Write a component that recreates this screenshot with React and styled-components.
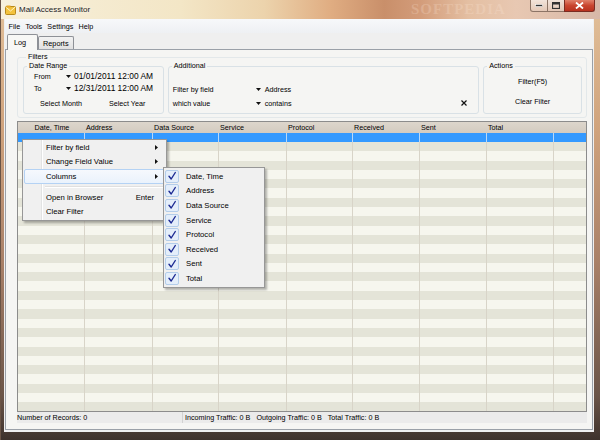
import React from 'react';
import styled, { createGlobalStyle, css } from 'styled-components';

const FONT = '"Liberation Sans", Arial, sans-serif';

const GlobalStyle = createGlobalStyle`
    html, body {
        margin: 0;
        padding: 0;
    }
    body {
        width: 600px;
        height: 440px;
        overflow: hidden;
        font-family: ${FONT};
        background: #4a3d35;
        color: #000;
    }
`;

const columns = [
    { title: 'Date, Time', width: 67, center: true },
    { title: 'Address', width: 68 },
    { title: 'Data Source', width: 66 },
    { title: 'Service', width: 68 },
    { title: 'Protocol', width: 66 },
    { title: 'Received', width: 67 },
    { title: 'Sent', width: 67 },
    { title: 'Total', width: 67 }
];

const checkedColumns = ['Date, Time', 'Address', 'Data Source', 'Service', 'Protocol', 'Received', 'Sent', 'Total'];

const Caret = () => (
    <svg width="5" height="3" viewBox="0 0 5 3">
        <path d="M0 0 H5 L2.5 3 Z" fill="#111" />
    </svg>
);

const SubArrow = () => (
    <svg width="3" height="5" viewBox="0 0 3 5">
        <path d="M0 0 L3 2.5 L0 5 Z" fill="#111" />
    </svg>
);

const Check = () => (
    <svg width="10" height="10" viewBox="0 0 10 10">
        <path d="M2 5.2 L4.2 8 L8.3 1.5" fill="none" stroke="#1d2b93" strokeWidth="1.4" strokeLinecap="round" strokeLinejoin="round" />
    </svg>
);

const AppIcon = () => (
    <svg width="11" height="10" viewBox="0 0 11 10">
        <rect x="0.5" y="1.5" width="10" height="8" rx="1" fill="#f3c23c" stroke="#b98a1a" />
        <path d="M0.8 2 L5.5 6 L10.2 2" fill="none" stroke="#fff3c4" strokeWidth="1" />
        <rect x="1.5" y="0.5" width="4" height="2" fill="#e8a92a" />
    </svg>
);

const App = () => {
    return (
        <>
            <GlobalStyle />
            <StWindow>
                <StTitleBar>
                    <AppIcon />
                    <StTitle>Mail Access Monitor</StTitle>
                    <StTitleMark>SOFTPEDIA</StTitleMark>
                    <StControls>
                        <StCtrlButton>
                            <svg width="8" height="3" viewBox="0 0 8 3">
                                <rect x="0.5" y="0.5" width="7" height="2" fill="#333" stroke="#fff" strokeWidth="0.6" />
                            </svg>
                        </StCtrlButton>
                        <StCtrlButton>
                            <svg width="8" height="7" viewBox="0 0 8 7">
                                <rect x="0.5" y="0.5" width="7" height="6" fill="none" stroke="#333" strokeWidth="1.2" />
                                <rect x="0.5" y="0.5" width="7" height="2" fill="#333" />
                            </svg>
                        </StCtrlButton>
                        <StCtrlButton $close>
                            <svg width="9" height="7" viewBox="0 0 9 7">
                                <path d="M1 0.5 L8 6.5 M8 0.5 L1 6.5" stroke="#fff" strokeWidth="1.8" />
                            </svg>
                        </StCtrlButton>
                    </StControls>
                </StTitleBar>

                <StClient>
                    <StMenuBar>
                        <StMenuBarItem>File</StMenuBarItem>
                        <StMenuBarItem>Tools</StMenuBarItem>
                        <StMenuBarItem>Settings</StMenuBarItem>
                        <StMenuBarItem>Help</StMenuBarItem>
                    </StMenuBar>

                    <StTabStrip>
                        <StTab $active>Log</StTab>
                        <StTab>Reports</StTab>
                    </StTabStrip>

                    <StTabPanel>
                        <StGroup $outer>
                            <StLegend>Filters</StLegend>
                            <StGroupRow>
                                <StGroup $w={141}>
                                    <StLegend>Date Range</StLegend>
                                    <StDateRow $top={0}>
                                        <StDateLabel>From</StDateLabel>
                                        <Caret />
                                        <StDateValue>01/01/2011 12:00 AM</StDateValue>
                                    </StDateRow>
                                    <StDateRow $top={2}>
                                        <StDateLabel>To</StDateLabel>
                                        <Caret />
                                        <StDateValue>12/31/2011 12:00 AM</StDateValue>
                                    </StDateRow>
                                    <StSelectRow>
                                        <StFlatButton>Select Month</StFlatButton>
                                        <StFlatButton>Select Year</StFlatButton>
                                    </StSelectRow>
                                </StGroup>

                                <StGroup $w={312}>
                                    <StLegend>Additional</StLegend>
                                    <StFieldRow $top={13}>
                                        <StFieldLabel>Filter by field</StFieldLabel>
                                        <Caret />
                                        <StFieldValue>Address</StFieldValue>
                                    </StFieldRow>
                                    <StFieldRow $top={4}>
                                        <StFieldLabel>which value</StFieldLabel>
                                        <Caret />
                                        <StFieldValue>contains</StFieldValue>
                                        <StClear>
                                            <svg width="6" height="6" viewBox="0 0 6 6">
                                                <path d="M0.5 0.5 L5.5 5.5 M5.5 0.5 L0.5 5.5" stroke="#111" strokeWidth="1.2" />
                                            </svg>
                                        </StClear>
                                    </StFieldRow>
                                </StGroup>

                                <StGroup $w={99}>
                                    <StLegend>Actions</StLegend>
                                    <StActionButton $top={5}>Filter(F5)</StActionButton>
                                    <StActionButton $top={10}>Clear Filter</StActionButton>
                                </StGroup>
                            </StGroupRow>
                        </StGroup>

                        <StGrid>
                            <StHeaderRow>
                                {columns.map((c) => (
                                    <StHeaderCell key={c.title} $w={c.width} $center={c.center}>
                                        {c.title}
                                    </StHeaderCell>
                                ))}
                                <StHeaderCell $fill />
                            </StHeaderRow>
                            <StSelectedRow>
                                {columns.map((c) => (
                                    <StBodyCell key={c.title} $w={c.width} $selected />
                                ))}
                                <StBodyCell $fill $selected />
                            </StSelectedRow>
                            <StStripedBody>
                                {columns.map((c) => (
                                    <StBodyCell key={c.title} $w={c.width} />
                                ))}
                                <StBodyCell $fill />
                            </StStripedBody>

                            <StContextMenu>
                                <StMenuItem>
                                    Filter by field
                                    <StArrow>
                                        <SubArrow />
                                    </StArrow>
                                </StMenuItem>
                                <StMenuItem>
                                    Change Field Value
                                    <StArrow>
                                        <SubArrow />
                                    </StArrow>
                                </StMenuItem>
                                <StMenuItem $hot>
                                    Columns
                                    <StArrow>
                                        <SubArrow />
                                    </StArrow>
                                </StMenuItem>
                                <StSeparator />
                                <StMenuItem>
                                    Open in Browser
                                    <StShortcut>Enter</StShortcut>
                                </StMenuItem>
                                <StMenuItem>Clear Filter</StMenuItem>

                                <StSubMenu>
                                    {checkedColumns.map((name) => (
                                        <StCheckItem key={name}>
                                            <StCheckBox>
                                                <Check />
                                            </StCheckBox>
                                            {name}
                                        </StCheckItem>
                                    ))}
                                </StSubMenu>
                            </StContextMenu>
                        </StGrid>

                        <StStatusBar>
                            <StStatusPanel $w={165}>Number of Records: 0</StStatusPanel>
                            <StStatusPanel $divider>
                                <span>Incoming Traffic: 0 B</span>
                                <span>Outgoing Traffic: 0 B</span>
                                <span>Total Traffic: 0 B</span>
                            </StStatusPanel>
                        </StStatusBar>
                    </StTabPanel>
                </StClient>
            </StWindow>
        </>
    );
};

export default App;

const StWindow = styled.div`
    width: 600px;
    height: 440px;
    box-sizing: border-box;
    display: flex;
    flex-direction: column;
    background: linear-gradient(to bottom, #e2c09a 0%, #cfa27c 30%, #a88068 60%, #6a5448 90%, #3e322c 100%);
    border-left: 1px solid #6a5446;
`;

const StTitleBar = styled.div`
    position: relative;
    height: 19px;
    flex-shrink: 0;
    display: flex;
    align-items: center;
    padding-left: 4px;
    gap: 3px;
    background: linear-gradient(
        to right,
        #f7f0dc 0%,
        #f3e6c6 30%,
        #ecd3ac 44%,
        #e0ad82 55%,
        #c98f6a 64%,
        #d39c7a 70%,
        #e4bfa2 78%,
        #e8c8b2 86%,
        #d7b8a8 100%
    );
`;

const StTitle = styled.span`
    font-family: ${FONT};
    font-size: 8px;
    color: #1a1a1a;
    text-shadow: 0 0 4px rgba(255, 255, 255, 0.9);
`;

const StTitleMark = styled.span`
    position: absolute;
    left: 410px;
    top: 1px;
    font-family: "Liberation Serif", serif;
    font-weight: bold;
    font-size: 15px;
    letter-spacing: 1px;
    color: rgba(255, 235, 220, 0.22);
`;

const StControls = styled.div`
    position: absolute;
    right: 5px;
    top: 0;
    display: flex;
`;

const StCtrlButton = styled.div`
    width: 18px;
    height: 12px;
    box-sizing: border-box;
    display: flex;
    align-items: center;
    justify-content: center;
    border: 1px solid #8c7466;
    border-top: none;
    margin-left: -1px;
    background: linear-gradient(to bottom, rgba(255, 255, 255, 0.55), rgba(230, 205, 190, 0.5));
    &:first-child {
        border-bottom-left-radius: 3px;
    }
    ${(props) =>
        props.$close &&
        css`
            width: 31px;
            border-color: #7a2c22;
            border-bottom-right-radius: 3px;
            background: linear-gradient(to bottom, #e0806a, #c9452f 50%, #b8321f);
        `}
`;

const StClient = styled.div`
    flex: 1;
    margin: 0 6px 8px 3px;
    padding: 0 1px;
    display: flex;
    flex-direction: column;
    background: #efefef;
`;

const StMenuBar = styled.div`
    height: 14px;
    display: flex;
    align-items: center;
    padding-left: 1px;
    background: linear-gradient(to bottom, #f7f8fa, #eef0f3);
`;

const StMenuBarItem = styled.span`
    font-size: 7.2px;
    padding: 0 2.6px;
`;

const StTabStrip = styled.div`
    height: 16px;
    display: flex;
    align-items: flex-end;
    padding-left: 2px;
`;

const StTab = styled.div`
    box-sizing: border-box;
    height: 13px;
    padding: 0 4px;
    font-size: 7.3px;
    display: flex;
    align-items: center;
    border: 1px solid #8e9197;
    border-bottom: none;
    border-radius: 2px 2px 0 0;
    background: linear-gradient(to bottom, #f3f3f3, #e0e0e0);
    ${(props) =>
        props.$active &&
        css`
            height: 16px;
            width: 31px;
            padding: 3px 6px 0;
            margin-bottom: -1px;
            position: relative;
            z-index: 1;
            background: #f8f8f6;
            align-items: flex-start;
        `}
`;

const StTabPanel = styled.div`
    height: 381px;
    box-sizing: border-box;
    border: 1px solid #9aa0a8;
    background: #f5f5f3;
    padding: 0 5px 0 11px;
    display: flex;
    flex-direction: column;
`;

const StGroup = styled.fieldset`
    margin: 0;
    padding: 0;
    box-sizing: border-box;
    min-width: 0;
    border: 1px solid #d9e1e6;
    border-radius: 3px;
    font-size: 7.2px;
    display: flex;
    flex-direction: column;
    width: ${(props) => (props.$w ? `${props.$w}px` : 'auto')};
    height: 53px;
    ${(props) =>
        props.$outer &&
        css`
            margin-top: 2px;
            height: 66px;
            border-color: #e3e8ea;
            padding: 0 4px 0 5px;
        `}
`;

const StLegend = styled.legend`
    font-size: 7.2px;
    line-height: 10px;
    padding: 0 2px;
    margin-left: 3px;
`;

const StGroupRow = styled.div`
    display: flex;
    gap: 4px;
    margin-top: -1px;
`;

const StDateRow = styled.div`
    height: 10px;
    display: flex;
    align-items: center;
    padding-left: 10px;
    margin-top: ${(props) => props.$top}px;
`;

const StDateLabel = styled.span`
    width: 32px;
    font-size: 7.2px;
`;

const StDateValue = styled.span`
    font-size: 8.4px;
    margin-left: 3px;
`;

const StSelectRow = styled.div`
    height: 10px;
    margin-top: 5px;
    display: flex;
    align-items: center;
    padding-left: 16px;
    gap: 27px;
`;

const StFlatButton = styled.span`
    font-size: 7.2px;
`;

const StFieldRow = styled.div`
    height: 10px;
    display: flex;
    align-items: center;
    padding-left: 4px;
    margin-top: ${(props) => props.$top}px;
`;

const StFieldLabel = styled.span`
    width: 83px;
    font-size: 7.2px;
`;

const StFieldValue = styled.span`
    font-size: 7.2px;
    margin-left: 4px;
`;

const StClear = styled.span`
    margin-left: auto;
    margin-right: 11px;
    display: flex;
`;

const StActionButton = styled.div`
    height: 10px;
    display: flex;
    align-items: center;
    justify-content: center;
    font-size: 7.2px;
    margin-top: ${(props) => props.$top}px;
`;

const StGrid = styled.div`
    position: relative;
    margin-top: 3px;
    height: 291px;
    box-sizing: border-box;
    border: 1px solid #8c8c8c;
    display: flex;
    flex-direction: column;
    background: #f6f6ee;
`;

const StHeaderRow = styled.div`
    height: 11px;
    flex-shrink: 0;
    display: flex;
    background: linear-gradient(to bottom, #ddd6cc, #d3cbc0);
`;

const StHeaderCell = styled.div`
    box-sizing: border-box;
    width: ${(props) => (props.$w ? `${props.$w}px` : 'auto')};
    flex: ${(props) => (props.$fill ? 1 : 'none')};
    font-size: 7.2px;
    line-height: 11px;
    padding-left: 1px;
    white-space: nowrap;
    text-align: ${(props) => (props.$center ? 'center' : 'left')};
`;

const StSelectedRow = styled.div`
    height: 9px;
    flex-shrink: 0;
    display: flex;
    background: #3399ff;
`;

const StStripedBody = styled.div`
    flex: 1;
    display: flex;
    background: repeating-linear-gradient(to bottom, #e4e4d8 0, #e4e4d8 9.3px, #f6f6ee 9.3px, #f6f6ee 18.6px);
`;

const StBodyCell = styled.div`
    box-sizing: border-box;
    width: ${(props) => (props.$w ? `${props.$w}px` : 'auto')};
    flex: ${(props) => (props.$fill ? 1 : 'none')};
    border-right: 1px solid ${(props) => (props.$selected ? '#b9d8f8' : '#d8d4c8')};
    &:last-child {
        border-right: none;
    }
`;

const StContextMenu = styled.div`
    position: absolute;
    left: 4px;
    top: 17px;
    width: 145px;
    box-sizing: border-box;
    padding: 0 1px 1px;
    border: 1px solid #979797;
    background: linear-gradient(to right, #f0f0f0 18px, #e2e3e3 18px, #e2e3e3 19px, #fff 19px, #fff 20px, #f0f0f0 20px);
    box-shadow: 2px 2px 2px rgba(0, 0, 0, 0.28);
    display: flex;
    flex-direction: column;
`;

const StMenuItem = styled.div`
    height: 14.5px;
    box-sizing: border-box;
    display: flex;
    align-items: center;
    padding-left: 21px;
    font-size: 7.7px;
    border: 1px solid transparent;
    border-radius: 2px;
    ${(props) =>
        props.$hot &&
        css`
            border-color: #b4d2f4;
            background: linear-gradient(to bottom, #f6f9fd, #eaf2fc);
        `}
`;

const StArrow = styled.span`
    margin-left: auto;
    margin-right: 6px;
    display: flex;
`;

const StShortcut = styled.span`
    margin-left: auto;
    margin-right: 10px;
`;

const StSeparator = styled.div`
    height: 6.5px;
    display: flex;
    align-items: center;
    &::after {
        content: '';
        margin-left: 21px;
        flex: 1;
        height: 1px;
        background: #e0e0e0;
        border-bottom: 1px solid #fff;
    }
`;

const StSubMenu = styled.div`
    position: absolute;
    left: 140px;
    top: 27px;
    width: 102px;
    box-sizing: border-box;
    padding: 1px;
    border: 1px solid #979797;
    background: #f0f0f0;
    box-shadow: 2px 2px 2px rgba(0, 0, 0, 0.28);
    display: flex;
    flex-direction: column;
`;

const StCheckItem = styled.div`
    height: 14.6px;
    display: flex;
    align-items: center;
    gap: 7px;
    font-size: 7.7px;
`;

const StCheckBox = styled.span`
    width: 14px;
    height: 13px;
    box-sizing: border-box;
    display: flex;
    align-items: center;
    justify-content: center;
    border: 1px solid #b3cdea;
    border-radius: 2px;
    background: #e4eefa;
`;

const StStatusBar = styled.div`
    height: 11px;
    display: flex;
    background: #ebebeb;
    font-size: 7.2px;
`;

const StStatusPanel = styled.div`
    display: flex;
    align-items: center;
    gap: 6px;
    width: ${(props) => (props.$w ? `${props.$w}px` : 'auto')};
    flex: ${(props) => (props.$w ? 'none' : 1)};
    padding-left: ${(props) => (props.$divider ? '2px' : '0')};
    border-left: ${(props) => (props.$divider ? '1px solid #d2d2d2' : 'none')};
`;
